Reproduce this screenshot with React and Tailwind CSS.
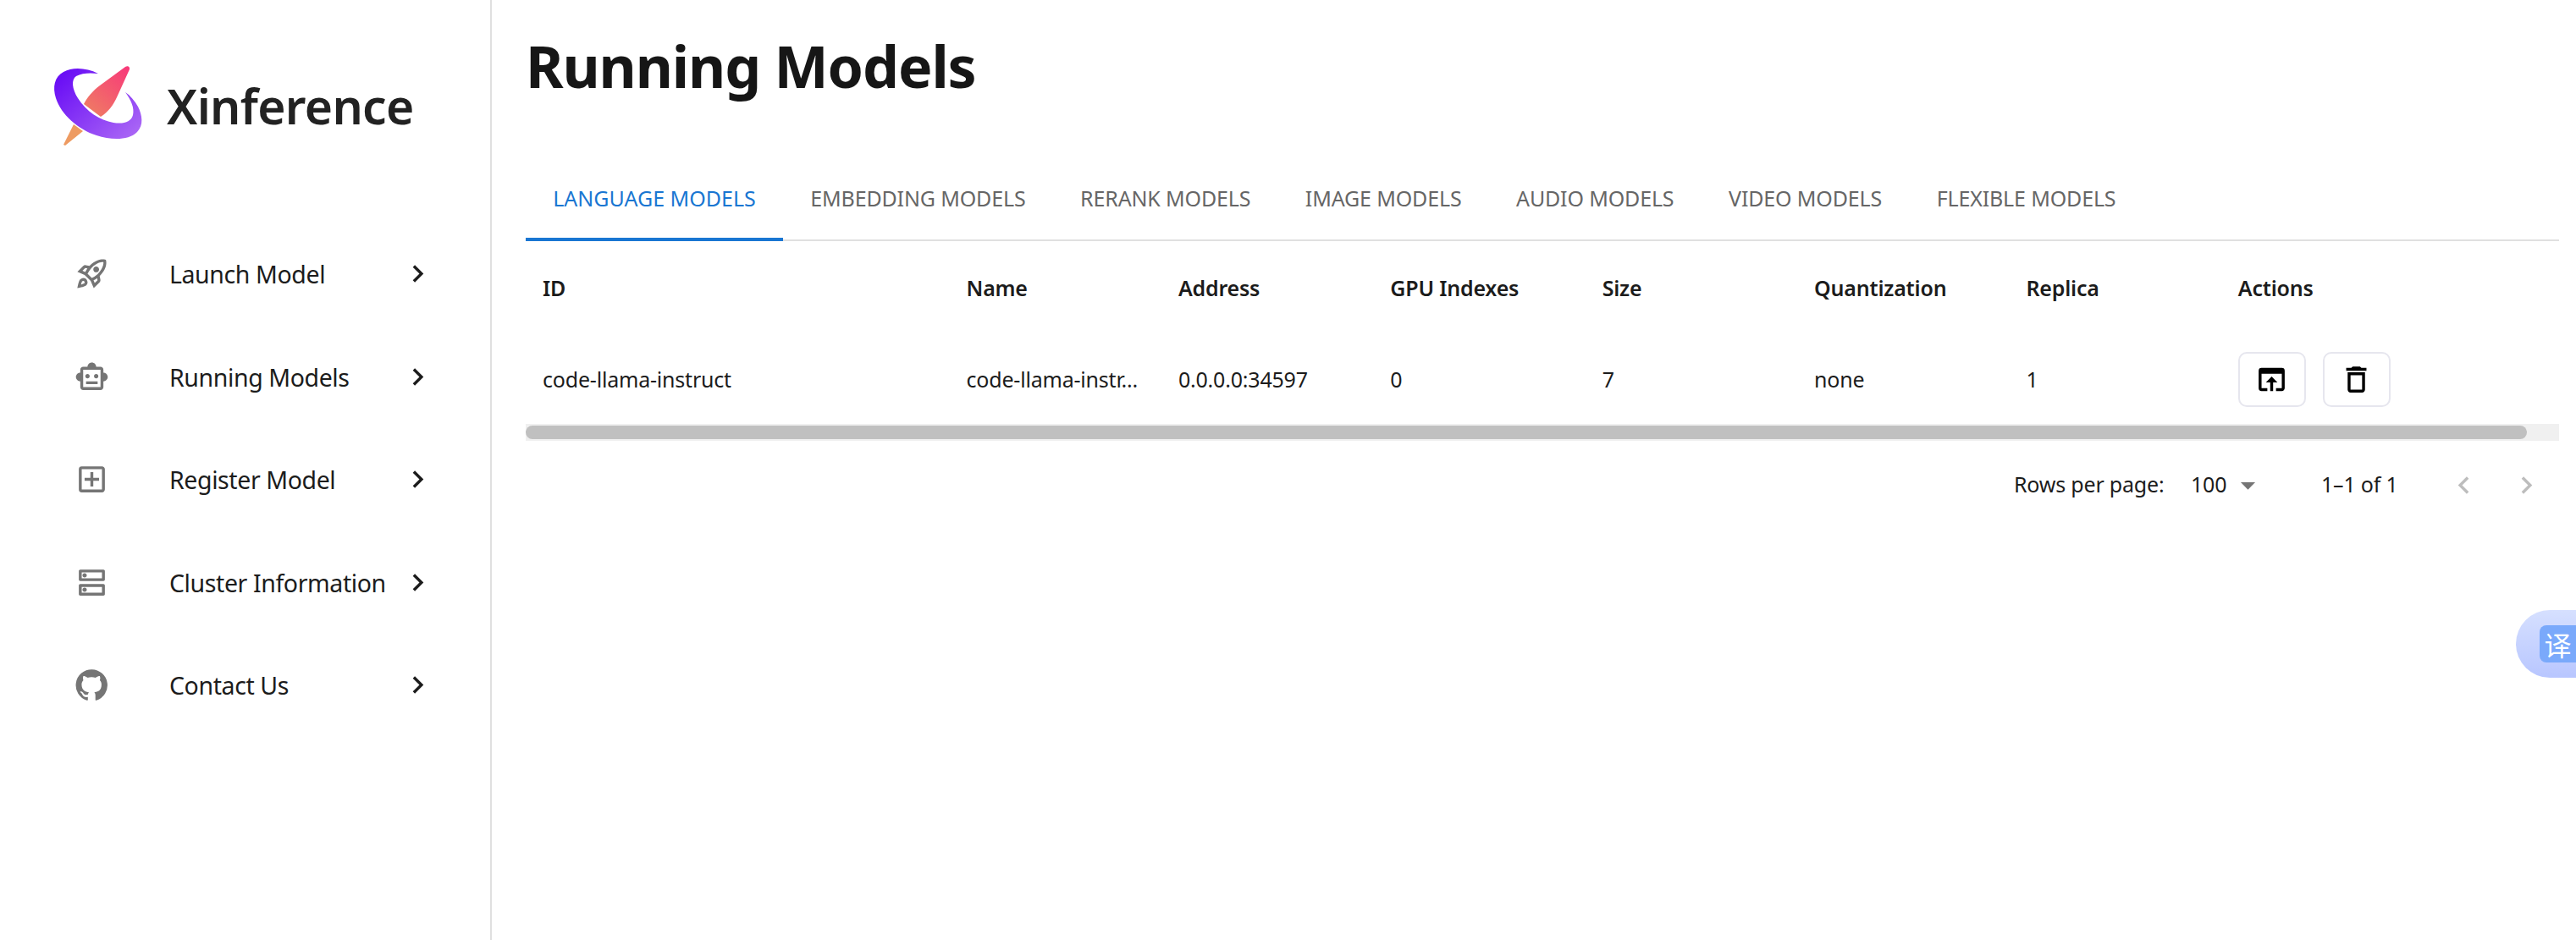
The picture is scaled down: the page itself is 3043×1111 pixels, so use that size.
import React from 'react';
import {
  MdOutlineRocketLaunch,
  MdOutlineSmartToy,
  MdOutlineAddBox,
  MdOutlineDns,
  MdChevronRight,
  MdChevronLeft,
  MdOpenInBrowser,
  MdOutlineDelete,
  MdArrowDropDown,
} from 'react-icons/md';

function GithubIcon({ className }) {
  return (
    <svg viewBox="0 0 24 24" fill="currentColor" className={className}>
      <path d="M12 1.27a11 11 0 00-3.48 21.46c.55.09.73-.28.73-.55v-1.84c-3.03.64-3.67-1.46-3.67-1.46-.55-1.29-1.28-1.65-1.28-1.65-.92-.65.1-.65.1-.65 1.1 0 1.73 1.1 1.73 1.1.92 1.65 2.57 1.2 3.21.92a2 2 0 01.64-1.47c-2.47-.27-5.04-1.19-5.04-5.5 0-1.1.46-2.1 1.2-2.84a3.76 3.76 0 010-2.93s.91-.18 3.02 1.1c1.73-.46 3.56-.46 5.3 0 2.1-1.28 3.02-1.1 3.02-1.1a3.76 3.76 0 010 2.93c.83.74 1.2 1.74 1.2 2.94 0 4.21-2.57 5.13-5.04 5.4.45.37.82.92.82 2.02v3.03c0 .27.1.64.73.55A11 11 0 0012 1.27" />
    </svg>
  );
}

function Logo() {
  return (
    <svg viewBox="0 0 150 130" className="w-[150px] h-[130px] shrink-0">
      <defs>
        <linearGradient id="ring" x1="0.1" y1="0.1" x2="1" y2="0.9">
          <stop offset="0" stopColor="#6a0ff5" />
          <stop offset="1" stopColor="#ab68f5" />
        </linearGradient>
        <linearGradient id="body" x1="1" y1="0" x2="0.2" y2="1">
          <stop offset="0" stopColor="#f8377a" />
          <stop offset="1" stopColor="#ef7b64" />
        </linearGradient>
      </defs>
      <path
        fill="url(#ring)"
        d="M76 27 C62 20 46 19 35 25 C24 31 22 43 26 56 C32 75 52 93 74 100 C92 106 112 106 122 96 C130 88 128 76 123 66 C119 59 114 53 108 49 C115 58 119 68 117 76 C115 84 106 87 94 85 C78 82 62 72 52 56 C45 45 44 34 50 30 C57 26 67 26 76 27 Z"
      />
      <path
        fill="url(#body)"
        d="M108 19 C110 18 112 18 113 20 L113 22 L98 55 C94 64 88 72 79 78 L59 63 C63 55 70 47 78 41 Z"
      />
      <path fill="#ee9b62" d="M47 87 L58 95 L37 112 L35 111 Z" />
    </svg>
  );
}

const navItems = [
  { label: 'Launch Model', Icon: MdOutlineRocketLaunch },
  { label: 'Running Models', Icon: MdOutlineSmartToy },
  { label: 'Register Model', Icon: MdOutlineAddBox },
  { label: 'Cluster Information', Icon: MdOutlineDns },
  { label: 'Contact Us', Icon: GithubIcon },
];

const tabs = [
  'LANGUAGE MODELS',
  'EMBEDDING MODELS',
  'RERANK MODELS',
  'IMAGE MODELS',
  'AUDIO MODELS',
  'VIDEO MODELS',
  'FLEXIBLE MODELS',
];

const columns = ['ID', 'Name', 'Address', 'GPU Indexes', 'Size', 'Quantization', 'Replica', 'Actions'];
const row = ['code-llama-instruct', 'code-llama-instr...', '0.0.0.0:34597', '0', '7', 'none', '1'];

export default function App() {
  return (
    <div className="h-screen flex overflow-hidden bg-white text-[#1c1c1c] font-['Noto_Sans','Open_Sans',sans-serif] relative">
      {/* Sidebar */}
      <aside className="w-[581px] shrink-0 border-r-2 border-[#e0e0e0]">
        <div className="flex items-center gap-[7px] pl-[40px] pt-[60px]">
          <Logo />
          <span className="text-[57px] leading-none font-semibold text-[#222] tracking-[-0.7px]">Xinference</span>
        </div>
        <nav className="mt-[73px] pl-[88px]">
          {navItems.map(({ label, Icon }) => (
            <div key={label} className="h-[121.5px] flex items-center">
              <Icon className="w-[41px] h-[41px] text-[#757575] shrink-0" />
              <span className="ml-[71px] w-[273px] pt-[2px] text-[28.5px] tracking-[-0.4px] whitespace-nowrap">{label}</span>
              <MdChevronRight className="w-[41px] h-[41px] text-[#1c1c1c] shrink-0" />
            </div>
          ))}
        </nav>
      </aside>

      {/* Main */}
      <main className="flex-1 pl-[40px] pr-[20px]">
        <h1 className="h-[160px] pt-[42px] text-[68px] leading-[72px] font-bold text-[#161616] tracking-[-1.1px]">Running Models</h1>

        <div className="flex h-[125px] border-b-2 border-[#e0e0e0]">
          {tabs.map((tab, i) => (
            <div
              key={tab}
              className={
                i === 0
                  ? 'h-[125px] w-[304px] pt-[28px] flex items-center justify-center border-b-4 border-[#1976d2] text-[#1976d2] text-[25px] whitespace-nowrap'
                  : 'h-[125px] px-[32.3px] pt-[24px] flex items-center text-[#666] text-[25px] tracking-[-0.15px] whitespace-nowrap'
              }
            >
              {tab}
            </div>
          ))}
        </div>

        <div className="grid grid-cols-[500.5px_repeat(6,250.4px)_1fr] h-[107px] pt-[4px] items-center text-[25px] font-semibold tracking-[-0.2px] text-[#1c1c1c]">
          {columns.map((c) => (
            <div key={c} className="pl-[20px]">{c}</div>
          ))}
        </div>

        <div className="grid grid-cols-[500.5px_repeat(6,250.4px)_1fr] h-[109px] pt-[4px] items-center text-[25px] tracking-[-0.2px] text-[#1c1c1c]">
          {row.map((c, i) => (
            <div key={i} className="pl-[20px] whitespace-nowrap overflow-hidden">{c}</div>
          ))}
          <div className="pl-[20px] flex gap-[20px]">
            <button className="w-[80px] h-[65px] flex items-center justify-center rounded-[10px] border-2 border-[#e6e6ee] text-black">
              <MdOpenInBrowser className="w-[41px] h-[41px]" />
            </button>
            <button className="w-[80px] h-[65px] flex items-center justify-center rounded-[10px] border-2 border-[#e6e6ee] text-black">
              <MdOutlineDelete className="w-[41px] h-[41px]" />
            </button>
          </div>
        </div>

        {/* Horizontal scrollbar */}
        <div className="h-[20px] bg-[#f0f0f0] py-[2px]">
          <div className="w-[2364px] h-[16px] rounded-full bg-[#c0c0c0]"></div>
        </div>

        {/* Pagination */}
        <div className="h-[104px] flex items-center text-[25px] tracking-[-0.2px] text-[#1c1c1c]">
          <span className="ml-[1758px] w-[209px] whitespace-nowrap">Rows per page:</span>
          <span className="w-[47px]">100</span>
          <MdArrowDropDown className="w-[41px] h-[41px] text-[#757575] shrink-0" />
          <span className="ml-[66px] w-[148px] whitespace-nowrap">1–1 of 1</span>
          <MdChevronLeft className="w-[41px] h-[41px] text-[#bdbdbd] shrink-0" />
          <MdChevronRight className="ml-[33px] w-[41px] h-[41px] text-[#bdbdbd] shrink-0" />
        </div>
      </main>

      {/* Translate widget */}
      <div className="absolute right-0 top-[721px] w-[71px] h-[80px] rounded-l-[40px] bg-gradient-to-b from-[#d6e0ff] to-[#b8c6ff] flex items-center justify-end">
        <div className="w-[43px] h-[44px] rounded-l-[8px] bg-[#7aa9fb] flex items-center justify-center text-white text-[32px] leading-none font-['Noto_Sans_CJK_SC',sans-serif]">
          译
        </div>
      </div>
    </div>
  );
}
